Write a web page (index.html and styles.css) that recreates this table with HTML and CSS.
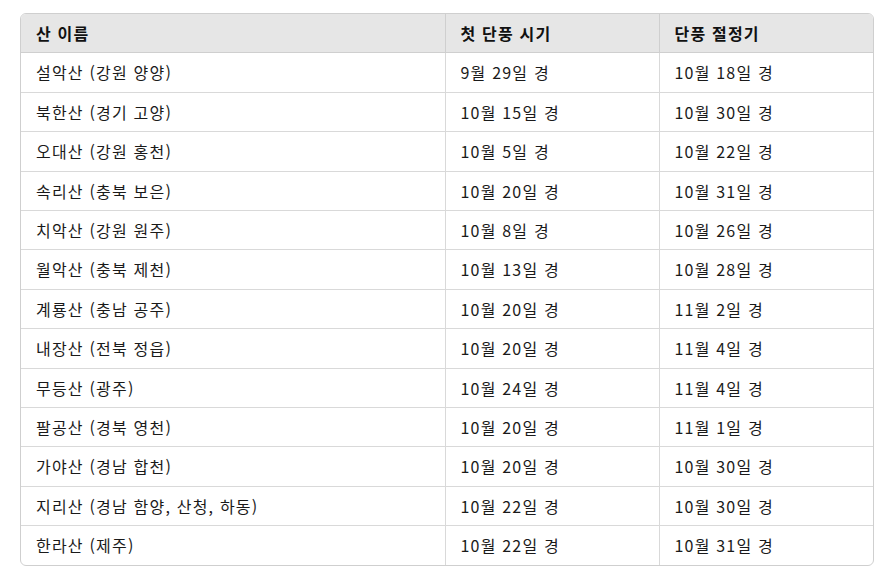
FILE: index.html
```html
<!DOCTYPE html>
<html lang="ko">
<head>
<meta charset="utf-8">
<link rel="stylesheet" href="styles.css">
</head>
<body>
<div class="wrap">
<table class="tbl">
<thead>
<tr><th class="c1">산 이름</th><th class="c2">첫 단풍 시기</th><th class="c3">단풍 절정기</th></tr>
</thead>
<tbody>
<tr><td>설악산 (강원 양양)</td><td>9월 29일 경</td><td>10월 18일 경</td></tr>
<tr><td>북한산 (경기 고양)</td><td>10월 15일 경</td><td>10월 30일 경</td></tr>
<tr><td>오대산 (강원 홍천)</td><td>10월 5일 경</td><td>10월 22일 경</td></tr>
<tr><td>속리산 (충북 보은)</td><td>10월 20일 경</td><td>10월 31일 경</td></tr>
<tr><td>치악산 (강원 원주)</td><td>10월 8일 경</td><td>10월 26일 경</td></tr>
<tr><td>월악산 (충북 제천)</td><td>10월 13일 경</td><td>10월 28일 경</td></tr>
<tr><td>계룡산 (충남 공주)</td><td>10월 20일 경</td><td>11월 2일 경</td></tr>
<tr><td>내장산 (전북 정읍)</td><td>10월 20일 경</td><td>11월 4일 경</td></tr>
<tr><td>무등산 (광주)</td><td>10월 24일 경</td><td>11월 4일 경</td></tr>
<tr><td>팔공산 (경북 영천)</td><td>10월 20일 경</td><td>11월 1일 경</td></tr>
<tr><td>가야산 (경남 합천)</td><td>10월 20일 경</td><td>10월 30일 경</td></tr>
<tr><td>지리산 (경남 함양, 산청, 하동)</td><td>10월 22일 경</td><td>10월 30일 경</td></tr>
<tr><td>한라산 (제주)</td><td>10월 22일 경</td><td>10월 31일 경</td></tr>
</tbody>
</table>
</div>
</body>
</html>
```
FILE: styles.css
```css
html, body {
  margin: 0;
  padding: 0;
  background: #ffffff;
}
body {
  padding: 13px 16px 0 20px;
  font-family: "Noto Sans CJK KR", "Noto Sans", sans-serif;
  font-size: 16px;
  letter-spacing: 1.2px;
  color: #1a1a1a;
}
.wrap {
  width: 854px;
  border: 1px solid #cfcfcf;
  border-radius: 6px;
  overflow: hidden;
  box-sizing: border-box;
}
.tbl {
  width: 100%;
  border-collapse: collapse;
  table-layout: fixed;
}
.tbl th, .tbl td {
  box-sizing: border-box;
  text-align: left;
  padding: 8px 15px;
  line-height: 22.4px;
  border-left: 1px solid #d9d9d9;
  border-top: 1px solid #d9d9d9;
}
.c1 { width: 424px; }
.c2 { width: 214px; }
.tbl th:first-child, .tbl td:first-child { border-left: none; }
.tbl thead th {
  border-top: none;
  background: #e6e6e6;
  font-weight: 700;
  color: #111;
  border-left-color: #cfcfcf;
  border-bottom: 1px solid #cfcfcf;
}
.tbl tbody tr:first-child td { border-top: none; }
```
